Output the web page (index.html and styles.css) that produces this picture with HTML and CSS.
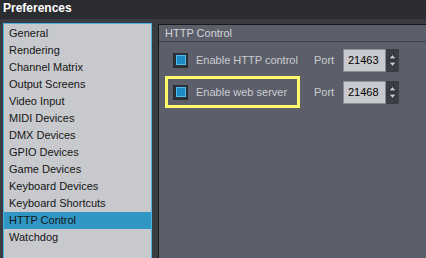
FILE: index.html
```html
<!DOCTYPE html>
<html lang="en">
<head>
    <meta charset="UTF-8">
    <title>Preferences</title>
    <link rel="stylesheet" href="styles.css">
</head>
<body>
    <div class="window">
        <div class="titlebar">Preferences</div>
        <div class="main">
            <ul class="pages">
                <li>General</li>
                <li>Rendering</li>
                <li>Channel Matrix</li>
                <li>Output Screens</li>
                <li>Video Input</li>
                <li>MIDI Devices</li>
                <li>DMX Devices</li>
                <li>GPIO Devices</li>
                <li>Game Devices</li>
                <li>Keyboard Devices</li>
                <li>Keyboard Shortcuts</li>
                <li class="selected">HTTP Control</li>
                <li>Watchdog</li>
            </ul>
            <div class="panel">
                <div class="panel-header">HTTP Control</div>
                <div class="panel-body">
                    <div class="setting">
                        <label class="option">
                            <span class="check"><span class="check-mark"></span></span>
                            <span class="option-text">Enable HTTP control</span>
                        </label>
                        <span class="port-label">Port</span>
                        <div class="spin">
                            <div class="spin-value">21463</div>
                            <div class="spin-buttons">
                                <svg width="13" height="21" viewBox="0 0 13 21">
                                    <path d="M2.5 9 L6.5 4.5 L10.5 9 Z" fill="#c9cacf" stroke="#1e1f23" stroke-width="1"/>
                                    <path d="M2.5 12 L6.5 16.5 L10.5 12 Z" fill="#c9cacf" stroke="#1e1f23" stroke-width="1"/>
                                </svg>
                            </div>
                        </div>
                    </div>
                    <div class="setting">
                        <label class="option highlight">
                            <span class="check"><span class="check-mark"></span></span>
                            <span class="option-text">Enable web server</span>
                        </label>
                        <span class="port-label">Port</span>
                        <div class="spin">
                            <div class="spin-value">21468</div>
                            <div class="spin-buttons">
                                <svg width="13" height="21" viewBox="0 0 13 21">
                                    <path d="M2.5 9 L6.5 4.5 L10.5 9 Z" fill="#c9cacf" stroke="#1e1f23" stroke-width="1"/>
                                    <path d="M2.5 12 L6.5 16.5 L10.5 12 Z" fill="#c9cacf" stroke="#1e1f23" stroke-width="1"/>
                                </svg>
                            </div>
                        </div>
                    </div>
                </div>
            </div>
        </div>
    </div>
</body>
</html>
```

FILE: styles.css
```css
body {
    margin: 0;
    font-family: "Liberation Sans", Arial, sans-serif;
    font-size: 11px;
    background-color: #3a3b40;
}
.window {
    width: 426px;
    height: 258px;
    overflow: hidden;
    display: flex;
    flex-direction: column;
}
.titlebar {
    height: 19px;
    line-height: 16px;
    padding-left: 3px;
    background-color: #2b2c30;
    color: #ffffff;
    font-weight: bold;
    font-size: 12px;
}
.main {
    flex: 1;
    display: flex;
    padding: 4px 0 0 3px;
}
.pages {
    list-style: none;
    margin: 0;
    padding: 1px 0 0 0;
    width: 147px;
    border: 1px solid #4db2e4;
    border-bottom: none;
    background-color: #c8c9cd;
    color: #151515;
}
.pages li {
    height: 17px;
    line-height: 17px;
    padding-left: 5px;
}
.pages li.selected {
    background-color: #3097c5;
}
.panel {
    flex: 1;
    margin: 1px 0 0 6px;
    border-left: 1px solid #18191b;
    border-top: 1px solid #18191b;
    background-color: #5c5f6a;
    color: #cacbd1;
}
.panel-header {
    height: 16px;
    line-height: 16px;
    padding-left: 6px;
    border-bottom: 1px solid #3e4047;
    color: #d3d4da;
}
.panel-body {
    padding: 2px 0 0 6px;
}
.setting {
    display: flex;
    align-items: center;
    height: 32px;
}
.option {
    display: flex;
    align-items: center;
    gap: 8px;
    flex-shrink: 0;
    box-sizing: border-box;
    width: 135px;
    height: 32px;
    padding-left: 5px;
    border: 3px solid transparent;
    white-space: nowrap;
}
.option-text {
    flex-shrink: 0;
}
.option.highlight {
    border-color: #fafa6a;
}
.check {
    flex-shrink: 0;
    width: 15px;
    height: 15px;
    display: flex;
    align-items: center;
    justify-content: center;
    background-color: #2e2f34;
}
.check-mark {
    width: 8px;
    height: 8px;
    border: 1px solid #55b8ec;
    background-color: #1c8bc3;
}
.port-label {
    margin-left: 14px;
    width: 29px;
}
.spin {
    display: flex;
    height: 23px;
}
.spin-value {
    box-sizing: border-box;
    width: 43px;
    height: 23px;
    line-height: 21px;
    padding-left: 4px;
    border: 1px solid #8b8d95;
    background-color: #c9cacf;
    color: #000000;
}
.spin-buttons {
    width: 13px;
    height: 23px;
    display: flex;
    align-items: center;
    background-color: #3c3e46;
}
```
